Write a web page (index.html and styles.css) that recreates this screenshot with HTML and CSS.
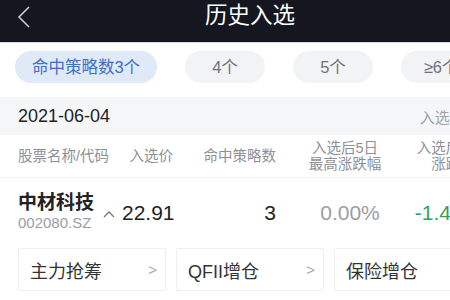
FILE: index.html
```html
<!DOCTYPE html>
<html lang="zh-CN">
<head>
    <meta charset="UTF-8">
    <meta name="viewport" content="width=device-width, initial-scale=1.0">
    <title>历史入选</title>
    <link rel="stylesheet" href="styles.css">
</head>
<body>
    <div class="nav-bar">
        <svg class="back" width="14" height="22" viewBox="0 0 14 22">
            <polyline points="12,1 2,11 12,21" fill="none" stroke="#c9cbd1" stroke-width="1.6"/>
        </svg>
        <span class="nav-title">历史入选</span>
    </div>

    <div class="tabs">
        <span class="pill active">命中策略数3个</span>
        <span class="pill pill-small">4个</span>
        <span class="pill pill-small">5个</span>
        <span class="pill pill-small">≥6个</span>
    </div>

    <div class="date-row">
        <span class="date">2021-06-04</span>
        <span class="date-note">入选1天</span>
    </div>

    <div class="table-head cols">
        <div class="c1">股票名称/代码</div>
        <div class="c2">入选价</div>
        <div class="c3">命中策略数</div>
        <div class="c4">入选后5日<br>最高涨跌幅</div>
        <div class="c5">入选后至今<br>涨跌幅</div>
    </div>

    <div class="stock-row cols">
        <div class="c1">
            <div class="stock-name">中材科技</div>
            <div class="stock-code">002080.SZ</div>
        </div>
        <div class="c2 num">
            <svg class="caret" width="12" height="8" viewBox="0 0 12 8">
                <polyline points="1,7 6,2 11,7" fill="none" stroke="#777" stroke-width="1.3"/>
            </svg>22.91
        </div>
        <div class="c3 num">3</div>
        <div class="c4 num muted">0.00%</div>
        <div class="c5 num green">-1.44%</div>
    </div>

    <div class="tags">
        <div class="tag"><span>主力抢筹</span><span class="arrow">&gt;</span></div>
        <div class="tag"><span>QFII增仓</span><span class="arrow">&gt;</span></div>
        <div class="tag"><span>保险增仓</span><span class="arrow">&gt;</span></div>
    </div>
</body>
</html>
```

FILE: styles.css
```css
body {
    margin: 0;
    width: 450px;
    height: 300px;
    overflow: hidden;
    background: #fff;
    font-family: "Liberation Sans", "Noto Sans CJK SC", sans-serif;
    color: #222;
}

/* top bar */
.nav-bar {
    height: 42px;
    background: #141720;
    border-bottom: 1px solid #d9dadd;
    position: relative;
    display: flex;
    justify-content: center;
    padding-left: 50px;
}

.back {
    position: absolute;
    left: 17px;
    top: 6px;
}

.nav-title {
    color: #fff;
    font-size: 22.5px;
    line-height: 32px;
}

/* strategy tabs */
.tabs {
    display: flex;
    gap: 28px;
    padding: 8px 0 14px 15px;
    white-space: nowrap;
}

.pill {
    flex-shrink: 0;
    height: 32px;
    line-height: 32px;
    border-radius: 16px;
    background: #f2f3f5;
    color: #6f7277;
    font-size: 16.5px;
    text-align: center;
}

.pill.active {
    width: 142px;
    background: #dfe9f8;
    color: #3d6fc2;
}

.pill-small {
    width: 80px;
}

/* date bar */
.date-row {
    height: 38px;
    background: #f5f6f8;
    display: flex;
    align-items: center;
    justify-content: space-between;
    padding-left: 18px;
    white-space: nowrap;
}

.date {
    font-size: 18px;
}

.date-note {
    font-size: 15px;
    color: #a0a3a8;
    margin-right: -23px;
}

/* table columns */
.cols {
    display: grid;
    grid-template-columns: 85px 70px 103px 138px 78px;
    padding-left: 18px;
    align-items: center;
    white-space: nowrap;
}

.c2, .c3 {
    text-align: right;
}

.c4, .c5 {
    text-align: center;
}

.table-head {
    height: 42px;
    border-bottom: 1px solid #f0f1f3;
    font-size: 14.5px;
    line-height: 16px;
    color: #8d9097;
}

.stock-row {
    height: 62px;
}

.stock-name {
    font-size: 19px;
    font-weight: bold;
    line-height: 22px;
    margin-top: 6px;
}

.stock-code {
    font-size: 15px;
    color: #9a9da3;
    line-height: 18px;
}

.num {
    font-size: 21px;
    padding-top: 8px;
}

.caret {
    margin-right: 7px;
    vertical-align: 2px;
}

.muted {
    color: #9a9da3;
    padding-left: 10px;
}

.green {
    color: #35a055;
    padding-right: 10px;
}

/* strategy tags */
.tags {
    display: flex;
    gap: 10px;
    padding: 8px 0 0 18px;
}

.tag {
    flex-shrink: 0;
    width: 148px;
    height: 43px;
    box-sizing: border-box;
    border: 1px solid #eeeff1;
    border-radius: 2px;
    display: flex;
    align-items: center;
    justify-content: space-between;
    padding: 0 8px 0 11px;
    font-size: 18px;
    color: #333;
}

.arrow {
    color: #a5a8ad;
    font-size: 15px;
}
```
